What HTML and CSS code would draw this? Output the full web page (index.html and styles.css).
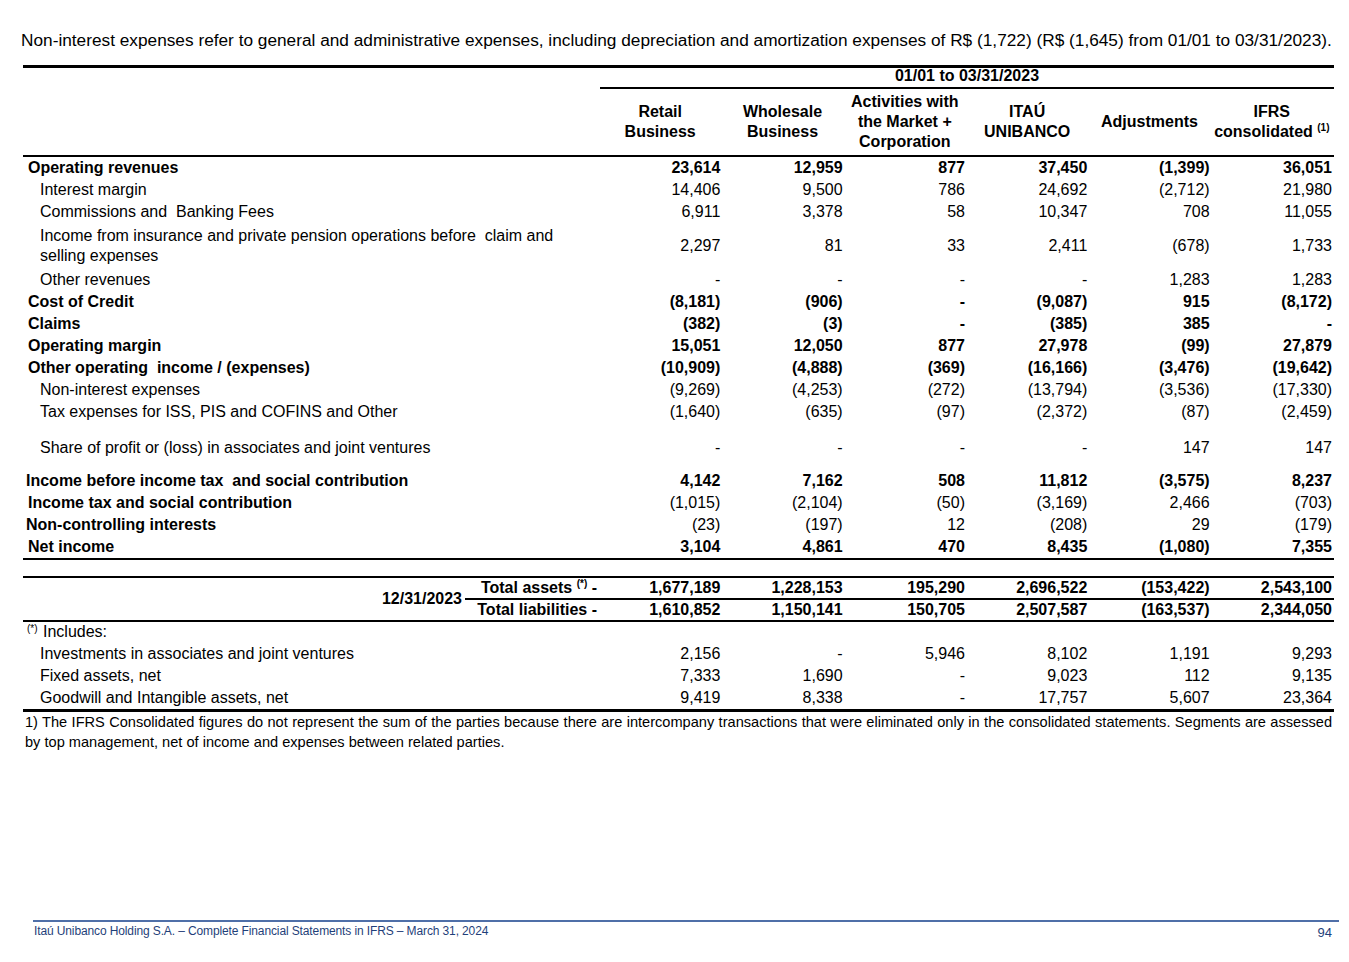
FILE: index.html
```html
<!DOCTYPE html>
<html lang="en">
<head>
<meta charset="utf-8">
<title>Segment information</title>
<link rel="stylesheet" href="styles.css">
</head>
<body>
<div class="page">
  <p class="intro">Non-interest expenses refer to general and administrative expenses, including depreciation and amortization expenses of R$ (1,722) (R$ (1,645) from 01/01 to 03/31/2023).</p>

  <table class="fin main">
    <colgroup>
      <col class="c-label"><col class="c-num"><col class="c-num"><col class="c-num"><col class="c-num"><col class="c-num"><col class="c-num">
    </colgroup>
    <thead>
      <tr class="period">
        <th class="blank"></th>
        <th colspan="6" class="period-cell">01/01 to 03/31/2023</th>
      </tr>
      <tr class="heads">
        <th class="blank"></th>
        <th>Retail<br>Business</th>
        <th>Wholesale<br>Business</th>
        <th>Activities with<br>the Market +<br>Corporation</th>
        <th>ITAÚ<br>UNIBANCO</th>
        <th>Adjustments</th>
        <th>IFRS<br>consolidated <sup>(1)</sup></th>
      </tr>
    </thead>
    <tbody>
      <tr class="b"><td class="l">Operating revenues</td><td>23,614</td><td>12,959</td><td>877</td><td>37,450</td><td>(1,399)</td><td>36,051</td></tr>
      <tr><td class="l sub">Interest margin</td><td>14,406</td><td>9,500</td><td>786</td><td>24,692</td><td>(2,712)</td><td>21,980</td></tr>
      <tr><td class="l sub">Commissions and&nbsp; Banking Fees</td><td>6,911</td><td>3,378</td><td>58</td><td>10,347</td><td>708</td><td>11,055</td></tr>
      <tr class="tall"><td class="l sub wrap">Income from insurance and private pension operations before&nbsp; claim and selling expenses</td><td>2,297</td><td>81</td><td>33</td><td>2,411</td><td>(678)</td><td>1,733</td></tr>
      <tr><td class="l sub">Other revenues</td><td>-</td><td>-</td><td>-</td><td>-</td><td>1,283</td><td>1,283</td></tr>
      <tr class="b"><td class="l">Cost of Credit</td><td>(8,181)</td><td>(906)</td><td>-</td><td>(9,087)</td><td>915</td><td>(8,172)</td></tr>
      <tr class="b"><td class="l">Claims</td><td>(382)</td><td>(3)</td><td>-</td><td>(385)</td><td>385</td><td>-</td></tr>
      <tr class="b"><td class="l">Operating margin</td><td>15,051</td><td>12,050</td><td>877</td><td>27,978</td><td>(99)</td><td>27,879</td></tr>
      <tr class="b"><td class="l">Other operating&nbsp; income / (expenses)</td><td>(10,909)</td><td>(4,888)</td><td>(369)</td><td>(16,166)</td><td>(3,476)</td><td>(19,642)</td></tr>
      <tr><td class="l sub">Non-interest expenses</td><td>(9,269)</td><td>(4,253)</td><td>(272)</td><td>(13,794)</td><td>(3,536)</td><td>(17,330)</td></tr>
      <tr><td class="l sub">Tax expenses for ISS, PIS and COFINS and Other</td><td>(1,640)</td><td>(635)</td><td>(97)</td><td>(2,372)</td><td>(87)</td><td>(2,459)</td></tr>
      <tr class="spaced"><td class="l sub">Share of profit or (loss) in associates and joint ventures</td><td>-</td><td>-</td><td>-</td><td>-</td><td>147</td><td>147</td></tr>
      <tr class="b"><td class="l out">Income before income tax&nbsp; and social contribution</td><td>4,142</td><td>7,162</td><td>508</td><td>11,812</td><td>(3,575)</td><td>8,237</td></tr>
      <tr class="b mixed"><td class="l">Income tax and social contribution</td><td>(1,015)</td><td>(2,104)</td><td>(50)</td><td>(3,169)</td><td>2,466</td><td>(703)</td></tr>
      <tr class="b mixed"><td class="l out">Non-controlling interests</td><td>(23)</td><td>(197)</td><td>12</td><td>(208)</td><td>29</td><td>(179)</td></tr>
      <tr class="b last"><td class="l">Net income</td><td>3,104</td><td>4,861</td><td>470</td><td>8,435</td><td>(1,080)</td><td>7,355</td></tr>
    </tbody>
  </table>

  <table class="fin totals">
    <colgroup>
      <col class="c-date"><col class="c-tlabel"><col class="c-num"><col class="c-num"><col class="c-num"><col class="c-num"><col class="c-num"><col class="c-num">
    </colgroup>
    <tbody>
      <tr class="b tot first">
        <td rowspan="2" class="date"><span class="date-text">12/31/2023</span></td>
        <td class="tlabel">Total assets <sup>(*)</sup> -</td><td>1,677,189</td><td>1,228,153</td><td>195,290</td><td>2,696,522</td><td>(153,422)</td><td>2,543,100</td>
      </tr>
      <tr class="b tot second">
        <td class="tlabel">Total&nbsp;liabilities -</td><td>1,610,852</td><td>1,150,141</td><td>150,705</td><td>2,507,587</td><td>(163,537)</td><td>2,344,050</td>
      </tr>
      <tr class="inc"><td colspan="2" class="l note"><sup>(*)</sup> Includes:</td><td></td><td></td><td></td><td></td><td></td><td></td></tr>
      <tr><td colspan="2" class="l sub">Investments in associates and joint ventures</td><td>2,156</td><td>-</td><td>5,946</td><td>8,102</td><td>1,191</td><td>9,293</td></tr>
      <tr><td colspan="2" class="l sub">Fixed assets, net</td><td>7,333</td><td>1,690</td><td>-</td><td>9,023</td><td>112</td><td>9,135</td></tr>
      <tr class="end"><td colspan="2" class="l sub">Goodwill and Intangible assets, net</td><td>9,419</td><td>8,338</td><td>-</td><td>17,757</td><td>5,607</td><td>23,364</td></tr>
    </tbody>
  </table>

  <p class="footnote">1) The IFRS Consolidated figures do not represent the sum of the parties because there are intercompany transactions that were eliminated only in the consolidated statements. Segments are assessed by top management, net of income and expenses between related parties.</p>

  <footer class="footer">
    <span class="footer-title">Itaú Unibanco Holding S.A. – Complete Financial Statements in IFRS – March 31, 2024</span>
    <span class="footer-page">94</span>
  </footer>
</div>
</body>
</html>
```

FILE: styles.css
```css
html, body {
  margin: 0;
  padding: 0;
  background: #ffffff;
}

body {
  font-family: "Liberation Sans", Arial, sans-serif;
  color: #000000;
}

.page {
  width: 1349px;
  height: 962px;
  display: flex;
  flex-direction: column;
  box-sizing: border-box;
  padding-top: 31px;
}

.intro {
  margin: 0 0 0 21px;
  font-size: 17.25px;
  line-height: 18px;
  white-space: nowrap;
}

.fin {
  margin-left: 23px;
  width: 1311px;
  border-collapse: collapse;
  table-layout: fixed;
  font-size: 16px;
  line-height: 22px;
}

.c-label { width: 577px; }
.c-num { width: 122.33px; }
.c-date { width: 442px; }
.c-tlabel { width: 135px; }

.fin td,
.fin th {
  padding: 0 2px 0 0;
  text-align: right;
  vertical-align: middle;
  white-space: nowrap;
}

.fin td {
  height: 22px;
}

.main {
  margin-top: 16px;
  border-top: 3px solid #000;
}

.fin .period th {
  line-height: 15px;
  height: 15px;
}

.fin .period-cell {
  font-weight: bold;
  text-align: center;
  padding: 0 0 4px 0;
  border-bottom: 2px solid #000;
}

.heads th {
  font-weight: bold;
  text-align: center;
  line-height: 20px;
  height: 66px;
  padding: 0 2px 0 0;
  border-bottom: 2px solid #000;
}

sup {
  font-size: 10px;
  line-height: 0;
  vertical-align: 6px;
}

.b td {
  font-weight: bold;
}

.fin td.l {
  text-align: left;
  padding-left: 5px;
}

.fin td.l.out {
  padding-left: 3px;
}

.fin td.l.sub {
  padding-left: 17px;
  font-weight: normal;
}

.mixed td {
  font-weight: normal;
}

.mixed td.l {
  font-weight: bold;
}

.fin td.wrap {
  white-space: normal;
  line-height: 20px;
  padding-right: 20px;
}

.tall td {
  height: 46px;
}

.spaced td {
  height: 44px;
  padding-top: 3px;
}

.last td {
  border-bottom: 2px solid #000;
}

.totals {
  margin-top: 16px;
  border-top: 2px solid #000;
}

.tot td {
  height: 20px;
  line-height: 20px;
}

.first td,
.second td {
  border-bottom: 2px solid #000;
}

.fin td.date {
  font-weight: bold;
  padding-right: 3px;
}

.fin td.tlabel {
  padding-right: 3px;
}

.inc td {
  height: 21px;
  line-height: 19px;
  vertical-align: top;
}

.fin td.l.note {
  padding-left: 4px;
  font-weight: normal;
}

.note sup {
  font-size: 10px;
  vertical-align: 5px;
  margin-right: 1px;
}

.end td {
  border-bottom: 3px solid #000;
}

.footnote {
  margin: 0 0 0 25px;
  font-size: 14.6px;
  line-height: 20px;
  text-align: justify;
  width: 1307px;
}

.footer {
  margin-top: auto;
  margin-bottom: 21px;
  margin-left: 33px;
  width: 1306px;
  border-top: 2px solid #4f6fa8;
  display: flex;
  justify-content: space-between;
  align-items: flex-start;
  padding-top: 2px;
  color: #1f3f7a;
}

.footer-title {
  font-size: 12px;
  line-height: 14px;
  letter-spacing: -0.12px;
  margin-left: 1px;
}

.footer-page {
  font-size: 13px;
  line-height: 16px;
  margin-right: 7px;
  margin-top: 1px;
}
```
